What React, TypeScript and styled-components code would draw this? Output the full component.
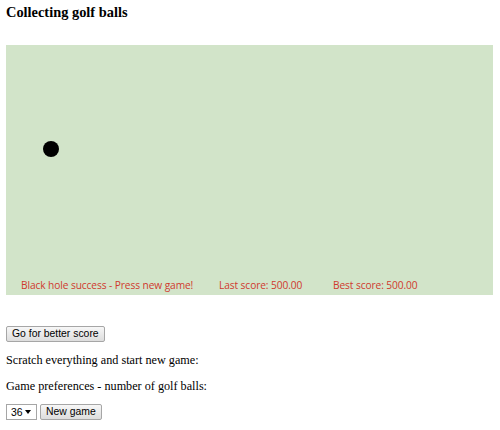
import React from 'react';
import styled, { createGlobalStyle } from 'styled-components';

const GlobalStyle = createGlobalStyle`
  body {
    margin: 0;
    padding: 6px;
    background: #ffffff;
    font-family: 'Liberation Serif', 'Times New Roman', serif;
    font-size: 12.2px;
    color: #000000;
  }
`;

const Title = styled.h3`
  font-size: 14.4px;
  font-weight: bold;
  margin: 0 0 27px;
  line-height: 12px;
`;

const Field = styled.div`
  position: relative;
  width: 487px;
  height: 250px;
  background: #d2e4c9;
  display: flex;
  flex-direction: column;
  justify-content: flex-end;
`;

const Ball = styled.div`
  position: absolute;
  width: 16px;
  height: 16px;
  border-radius: 50%;
  background: #000000;
`;

const StatusBar = styled.div`
  display: flex;
  padding: 0 0 3px 15px;
  font-family: 'Open Sans', 'Liberation Sans', sans-serif;
  font-size: 10.2px;
  color: #d0392e;
  letter-spacing: -0.1px;
`;

const Status = styled.span<{ $width: number }>`
  width: ${(p) => p.$width}px;
`;

const Controls = styled.div`
  margin-top: 31px;
`;

const Button = styled.button`
  font-family: 'Liberation Sans', Arial, sans-serif;
  font-size: 10.4px;
  padding: 0 5px;
  height: 16px;
  line-height: 12px;
  background: linear-gradient(#f7f7f7, #dddddd);
  border: 1px solid #a6a6a6;
  border-radius: 2px;
  color: #000;
`;

const Line = styled.p`
  margin: 10px 0 0;
  line-height: 16px;
`;

const Row = styled.div`
  display: flex;
  gap: 3px;
  margin-top: 10px;
`;

const arrow =
  "data:image/svg+xml,%3Csvg xmlns='http://www.w3.org/2000/svg' width='6' height='4'%3E%3Cpath d='M0 0h6L3 4z' fill='%23000'/%3E%3C/svg%3E";

const Select = styled.select`
  appearance: none;
  font-family: 'Liberation Sans', Arial, sans-serif;
  font-size: 10.4px;
  height: 16px;
  width: 31px;
  padding: 0 0 0 4px;
  border: 1px solid #a6a6a6;
  border-radius: 0;
  background: #fff url("${arrow}") no-repeat right 5px center;
  color: #000;
`;

function App(): JSX.Element {
  return (
    <>
      <GlobalStyle />
      <Title>Collecting golf balls</Title>
      <Field>
        <Ball style={{ left: 37, top: 96 }} />
        <StatusBar>
          <Status $width={198}>Black hole success - Press new game!</Status>
          <Status $width={114}>Last score: 500.00</Status>
          <Status $width={100}>Best score: 500.00</Status>
        </StatusBar>
      </Field>
      <Controls>
        <Button>Go for better score</Button>
        <Line>Scratch everything and start new game:</Line>
        <Line>Game preferences - number of golf balls:</Line>
        <Row>
          <Select defaultValue="36">
            <option>36</option>
          </Select>
          <Button>New game</Button>
        </Row>
      </Controls>
    </>
  );
}

export default App;
